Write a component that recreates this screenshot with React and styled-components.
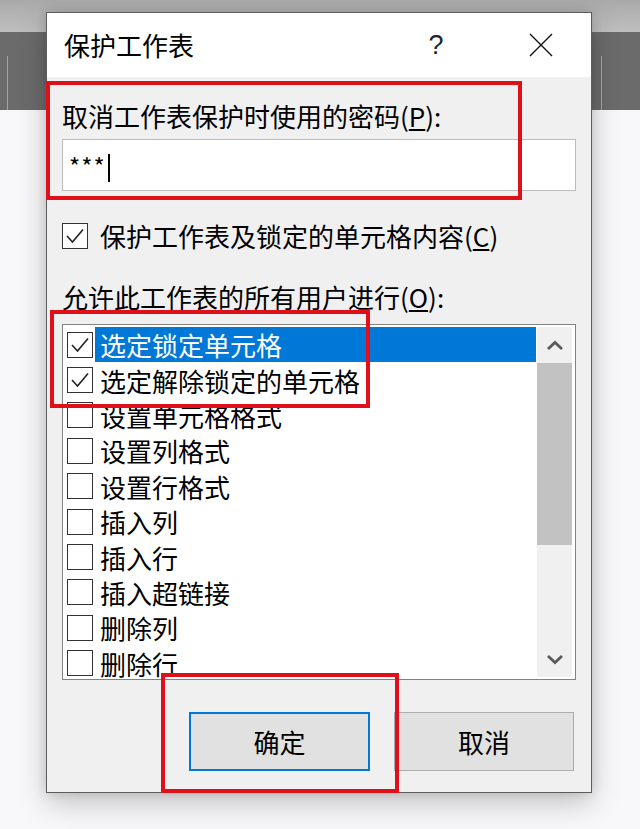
import React from "react";
import styled, { createGlobalStyle } from "styled-components";

const GlobalStyle = createGlobalStyle`
  html, body {
    margin: 0;
    padding: 0;
  }
  body {
    font-family: "Noto Sans CJK SC", "Noto Sans", sans-serif;
    color: #000;
  }
`;

const Page = styled.div`
  position: relative;
  width: 640px;
  height: 829px;
  overflow: hidden;
  background:
    linear-gradient(#a4a4a4, #a4a4a4) 7px 56px / 1px 54px no-repeat,
    linear-gradient(#a4a4a4, #a4a4a4) 601px 56px / 1px 54px no-repeat,
    linear-gradient(to bottom, #a9a9a9 0, #bfbfbf 32px, #6b6b6b 32px, #6b6b6b 110px, #f8f8fa 110px);
`;

const Dialog = styled.div`
  position: absolute;
  left: 46px;
  top: 12px;
  width: 546px;
  height: 781px;
  box-sizing: border-box;
  border: 1px solid #5c5c5c;
  background: #f0f0f0;
  display: flex;
  flex-direction: column;
  box-shadow: 0 10px 28px rgba(0, 0, 0, 0.22), 0 0 10px rgba(0, 0, 0, 0.12);
`;

const TitleBar = styled.div`
  height: 64px;
  flex-shrink: 0;
  background: #fff;
  display: flex;
  align-items: center;
  padding-left: 17px;
`;

const Title = styled.div`
  font-size: 26px;
  line-height: 30px;
  flex: 1;
`;

const TitleButton = styled.div`
  width: ${({ $w }) => $w}px;
  height: 64px;
  display: flex;
  align-items: center;
  justify-content: center;
  font-family: "Liberation Sans", "Noto Sans", sans-serif;
  font-size: 27px;
  color: #222;
`;

const Body = styled.div`
  display: flex;
  flex-direction: column;
  padding: 0 15px;
`;

const Label = styled.div`
  margin-top: ${({ $top }) => $top}px;
  font-size: 26px;
  line-height: 30px;
  white-space: nowrap;
`;

const PasswordInput = styled.div`
  margin-top: 8px;
  height: 52px;
  box-sizing: border-box;
  border: 1px solid #bcbcbc;
  background: #fff;
  display: flex;
  align-items: center;
  padding-left: 6px;
  font-size: 24px;
  letter-spacing: 1px;
`;

const Caret = styled.span`
  display: inline-block;
  width: 2px;
  height: 28px;
  margin-top: 6px;
  margin-left: 2px;
  background: #000;
`;

const CheckRow = styled.div`
  margin-top: 30px;
  height: 30px;
  display: flex;
  align-items: center;
`;

const Box = styled.span`
  width: 26px;
  height: 26px;
  box-sizing: border-box;
  flex-shrink: 0;
  border: 1px solid #333;
  background: #fff;
  display: flex;
  align-items: center;
  justify-content: center;
`;

const CheckText = styled.span`
  margin-left: 12px;
  font-size: 26px;
  line-height: 30px;
  white-space: nowrap;
`;

const List = styled.div`
  margin-top: 12px;
  height: 356px;
  box-sizing: border-box;
  border: 1px solid #828282;
  background: #fff;
  display: flex;
  overflow: hidden;
`;

const Rows = styled.div`
  flex: 1;
  padding: 2px 0 0 4px;
  display: flex;
  flex-direction: column;
`;

const Row = styled.div`
  height: 35.4px;
  flex-shrink: 0;
  display: flex;
  align-items: center;
`;

const RowText = styled.span`
  margin-left: 2px;
  padding-left: 5px;
  flex: 1;
  height: 35px;
  display: flex;
  align-items: center;
  font-size: 26px;
  white-space: nowrap;
  background: ${({ $selected }) => ($selected ? "#0078d7" : "transparent")};
  color: ${({ $selected }) => ($selected ? "#fff" : "#000")};
`;

const ScrollBar = styled.div`
  width: 35px;
  margin: 2px 3px 2px 1px;
  background: #f0f0f0;
  display: flex;
  flex-direction: column;
`;

const Arrow = styled.div`
  height: 36px;
  display: flex;
  align-items: center;
  justify-content: center;
`;

const Thumb = styled.div`
  height: 182px;
  background: #c2c2c2;
`;

const Track = styled.div`
  flex: 1;
`;

const ButtonRow = styled.div`
  margin-top: 32px;
  display: flex;
  justify-content: flex-end;
  gap: 24px;
  padding-right: 2px;
`;

const Button = styled.div`
  width: ${({ $w }) => $w}px;
  height: 59px;
  box-sizing: border-box;
  background: #e1e1e1;
  border: ${({ $default }) => ($default ? "2px solid #0078d7" : "1px solid #adadad")};
  display: flex;
  align-items: center;
  justify-content: center;
  font-size: 26px;
`;

const Mark = styled.div`
  position: absolute;
  left: ${({ $x }) => $x}px;
  top: ${({ $y }) => $y}px;
  width: ${({ $w }) => $w}px;
  height: ${({ $h }) => $h}px;
  box-sizing: border-box;
  border: 4px solid #e0101a;
  pointer-events: none;
`;

const Check = () => (
  <svg width="22" height="22" viewBox="0 0 22 22">
    <polyline points="3,11 8.5,17 19,4.5" fill="none" stroke="#222" strokeWidth="1.6" />
  </svg>
);

const Chevron = ({ up }) => (
  <svg width="18" height="11" viewBox="0 0 18 11">
    <polyline
      points={up ? "2,9 9,2.5 16,9" : "2,2 9,8.5 16,2"}
      fill="none"
      stroke="#5a5a5a"
      strokeWidth="2.8"
    />
  </svg>
);

const items = [
  { label: "选定锁定单元格", checked: true, selected: true },
  { label: "选定解除锁定的单元格", checked: true },
  { label: "设置单元格格式" },
  { label: "设置列格式" },
  { label: "设置行格式" },
  { label: "插入列" },
  { label: "插入行" },
  { label: "插入超链接" },
  { label: "删除列" },
  { label: "删除行" },
];

export default function App() {
  return (
    <Page>
      <GlobalStyle />
      <Dialog>
        <TitleBar>
          <Title>保护工作表</Title>
          <TitleButton $w={110}>?</TitleButton>
          <TitleButton $w={100}>
            <svg width="24" height="24" viewBox="0 0 24 24">
              <path d="M1 1 L23 23 M23 1 L1 23" stroke="#111" strokeWidth="1.4" />
            </svg>
          </TitleButton>
        </TitleBar>
        <Body>
          <Label $top={24}>
            取消工作表保护时使用的密码(<u>P</u>):
          </Label>
          <PasswordInput>
            ***
            <Caret />
          </PasswordInput>
          <CheckRow>
            <Box>
              <Check />
            </Box>
            <CheckText>
              保护工作表及锁定的单元格内容(<u>C</u>)
            </CheckText>
          </CheckRow>
          <Label $top={31}>
            允许此工作表的所有用户进行(<u>O</u>):
          </Label>
          <List>
            <Rows>
              {items.map((item) => (
                <Row key={item.label}>
                  <Box>{item.checked && <Check />}</Box>
                  <RowText $selected={item.selected}>{item.label}</RowText>
                </Row>
              ))}
            </Rows>
            <ScrollBar>
              <Arrow>
                <Chevron up />
              </Arrow>
              <Thumb />
              <Track />
              <Arrow>
                <Chevron />
              </Arrow>
            </ScrollBar>
          </List>
          <ButtonRow>
            <Button $w={181} $default>
              确定
            </Button>
            <Button $w={180}>取消</Button>
          </ButtonRow>
        </Body>
      </Dialog>
      <Mark $x={46} $y={81} $w={476} $h={119} />
      <Mark $x={50} $y={310} $w={320} $h={98} />
      <Mark $x={161} $y={673} $w={238} $h={120} />
    </Page>
  );
}
